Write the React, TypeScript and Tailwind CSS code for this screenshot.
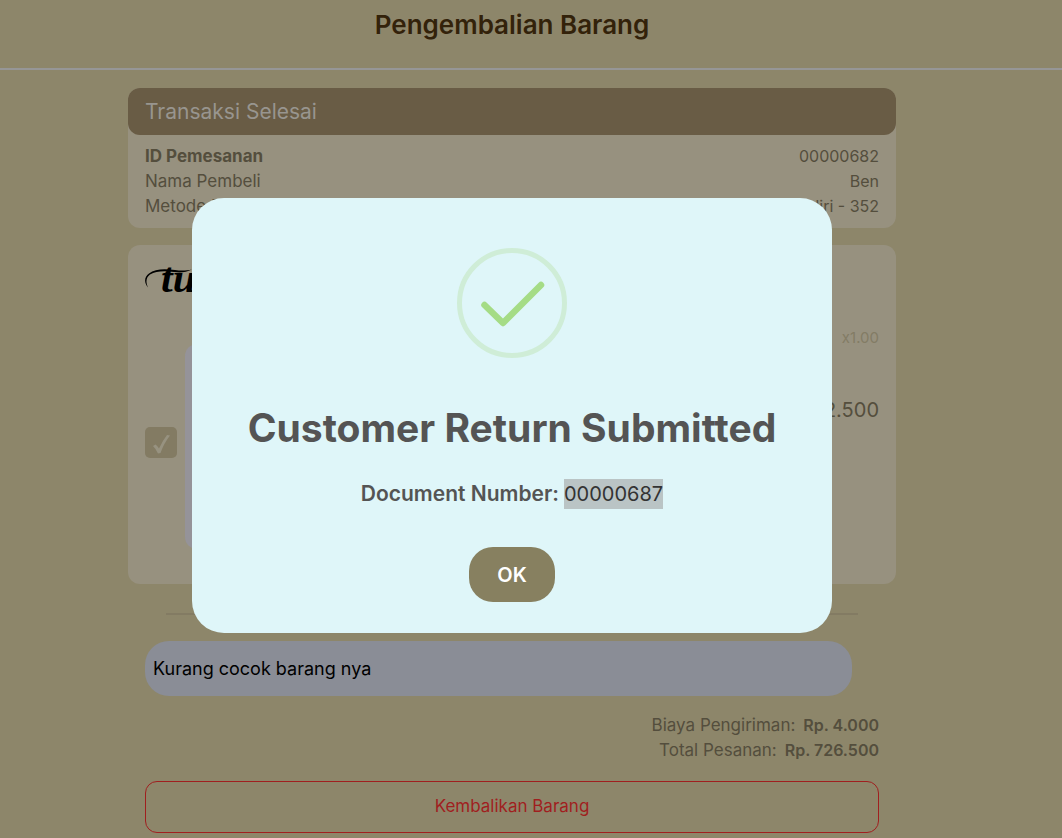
import { useState } from 'react';

interface DetailRow {
    label: string;
    value: string;
    strong?: boolean;
}

const details: DetailRow[] = [
    { label: 'ID Pemesanan', value: '00000682', strong: true },
    { label: 'Nama Pembeli', value: 'Ben' },
    { label: 'Metode Pembayaran', value: 'Mandiri - 352' },
];

const totals: DetailRow[] = [
    { label: 'Biaya Pengiriman:', value: 'Rp. 4.000' },
    { label: 'Total Pesanan:', value: 'Rp. 726.500' },
];

function BrandMark() {
    return (
        <div className="relative h-[64px] w-[90px] pl-4 text-black">
            <span className="block font-['Liberation_Serif',serif] text-[42px] leading-[32px] font-bold italic">tu</span>
            {/* swash running into the crossbar of the t */}
            <svg className="absolute left-0 top-0" width="50" height="34" viewBox="0 0 50 34" fill="currentColor">
                <path d="M3 25.500C-1 21 -1 15 4 11.500C10 6.500 20 6.500 30 8C37 9 42 8.500 47 7.500C41 10.500 35 11 29 10C19 8.500 11 9 5 12.500C1 15.500 0.500 20 3 25.500Z" />
            </svg>
        </div>
    );
}

function OrderSummary() {
    return (
        <section className="rounded-xl bg-[#97917f]">
            <h2 className="rounded-xl bg-[#695c45] px-[17px] text-[21px] leading-[47px] text-[#98958f]">Transaksi Selesai</h2>
            <dl className="px-[17px] py-[9px] leading-[25px]">
                {details.map((row) => (
                    <div key={row.label} className="flex justify-between">
                        <dt className={row.strong ? 'text-[17px] leading-[25px] font-bold' : 'text-[17px] leading-[25px]'}>{row.label}</dt>
                        <dd>{row.value}</dd>
                    </div>
                ))}
            </dl>
        </section>
    );
}

function OrderItem() {
    const [checked, setChecked] = useState(true);

    return (
        <section className="mt-[17px] rounded-xl bg-[#97917f] p-[17px]">
            <BrandMark />
            <div className="flex h-[241px] items-center gap-2">
                <label className="relative mb-2 block h-[31px] w-8">
                    <input
                        type="checkbox"
                        aria-label="Pilih barang"
                        checked={checked}
                        onChange={(e) => setChecked(e.target.checked)}
                        className="block h-full w-full appearance-none rounded-[5px] bg-[#837b63]"
                    />
                    {checked && (
                        <svg className="pointer-events-none absolute inset-0" width="32" height="31" viewBox="0 0 32 31" fill="#979280">
                            <path d="M8 19L10.500 17.500Q12.500 19 14 21.500Q18 13 22 8L25 8.500Q19 16 15.500 26L13 26.500Q11 22 8 19Z" />
                        </svg>
                    )}
                </label>
                <div className="h-[205px] w-[205px] rounded-xl bg-[#959399]" />
                <div className="flex-1 self-stretch text-right">
                    <p className="text-[15px] leading-6 text-[#837c65]">x1.00</p>
                    <p className="mt-[45px] text-xl leading-[30px]">Rp. 722.500</p>
                </div>
            </div>
        </section>
    );
}

function SuccessDialog({ onClose }: { onClose: () => void }) {
    return (
        <div className="fixed inset-0 flex items-start justify-center pt-[198px] pr-[38px]">
            <div role="dialog" aria-modal="true" aria-labelledby="dialog-title" className="flex w-full max-w-[640px] flex-col items-center rounded-[32px] bg-[#dff6f9] pt-[50px] pb-[31px] text-[#545454]">
                <svg width="110" height="110" viewBox="0 0 110 110" fill="none">
                    <circle cx="55" cy="55" r="52.500" stroke="#cfedd7" strokeWidth="5" />
                    <path d="M27.500 57L46 75L84 37" stroke="#a5dc86" strokeWidth="6.500" strokeLinecap="round" strokeLinejoin="round" />
                </svg>
                <h2 id="dialog-title" className="mt-[47px] text-[39px] leading-[46px] font-bold">Customer Return Submitted</h2>
                <p className="mt-7 flex gap-[5px] text-xl leading-[30px]">
                    <b className="text-[21px] leading-[30px] font-semibold">Document Number:</b>
                    <mark className="bg-[#bac4c5] text-[#333]">00000687</mark>
                </p>
                <button onClick={onClose} className="mt-[38px] h-[55px] w-[86px] rounded-3xl bg-[#878060] text-xl font-semibold text-white">OK</button>
            </div>
        </div>
    );
}

export default function App() {
    const [open, setOpen] = useState(true);
    const [reason, setReason] = useState('Kurang cocok barang nya');

    return (
        <div className="min-h-screen bg-[#8d866a] font-['Inter',sans-serif] text-base text-[#544e3d]">
            <header className="border-b-2 border-[#969696] pr-[38px] pt-[7px] pb-[25px] text-center">
                <h1 className="text-[26px] leading-9 font-semibold text-[#33220a]">Pengembalian Barang</h1>
            </header>

            <main className="pt-[18px] pr-[38px]">
                <div className="mx-auto w-3/4">
                    <OrderSummary />
                    <OrderItem />

                    <hr className="mx-[38px] mt-[29px] border-t-2 border-[#837b63]" />

                    <div className="px-[17px] pt-[26px] pb-[5px]">
                        <div className="pr-[27px]">
                            <input
                                type="text"
                                aria-label="Alasan pengembalian"
                                value={reason}
                                onChange={(e) => setReason(e.target.value)}
                                className="block h-[55px] w-full rounded-3xl bg-[#8a8d96] px-2 text-lg text-black outline-none"
                            />
                        </div>
                        <dl className="mt-[17px] leading-[25px]">
                            {totals.map((row) => (
                                <div key={row.label} className="flex justify-end gap-2">
                                    <dt className="text-[17px] leading-[25px]">{row.label}</dt>
                                    <dd className="font-semibold">{row.value}</dd>
                                </div>
                            ))}
                        </dl>
                        <button className="mt-[18px] h-[52px] w-full rounded-xl border border-[#a01f1f] text-[17px] text-[#a01f1f]">Kembalikan Barang</button>
                    </div>
                </div>
            </main>

            {open && <SuccessDialog onClose={() => setOpen(false)} />}
        </div>
    );
}
